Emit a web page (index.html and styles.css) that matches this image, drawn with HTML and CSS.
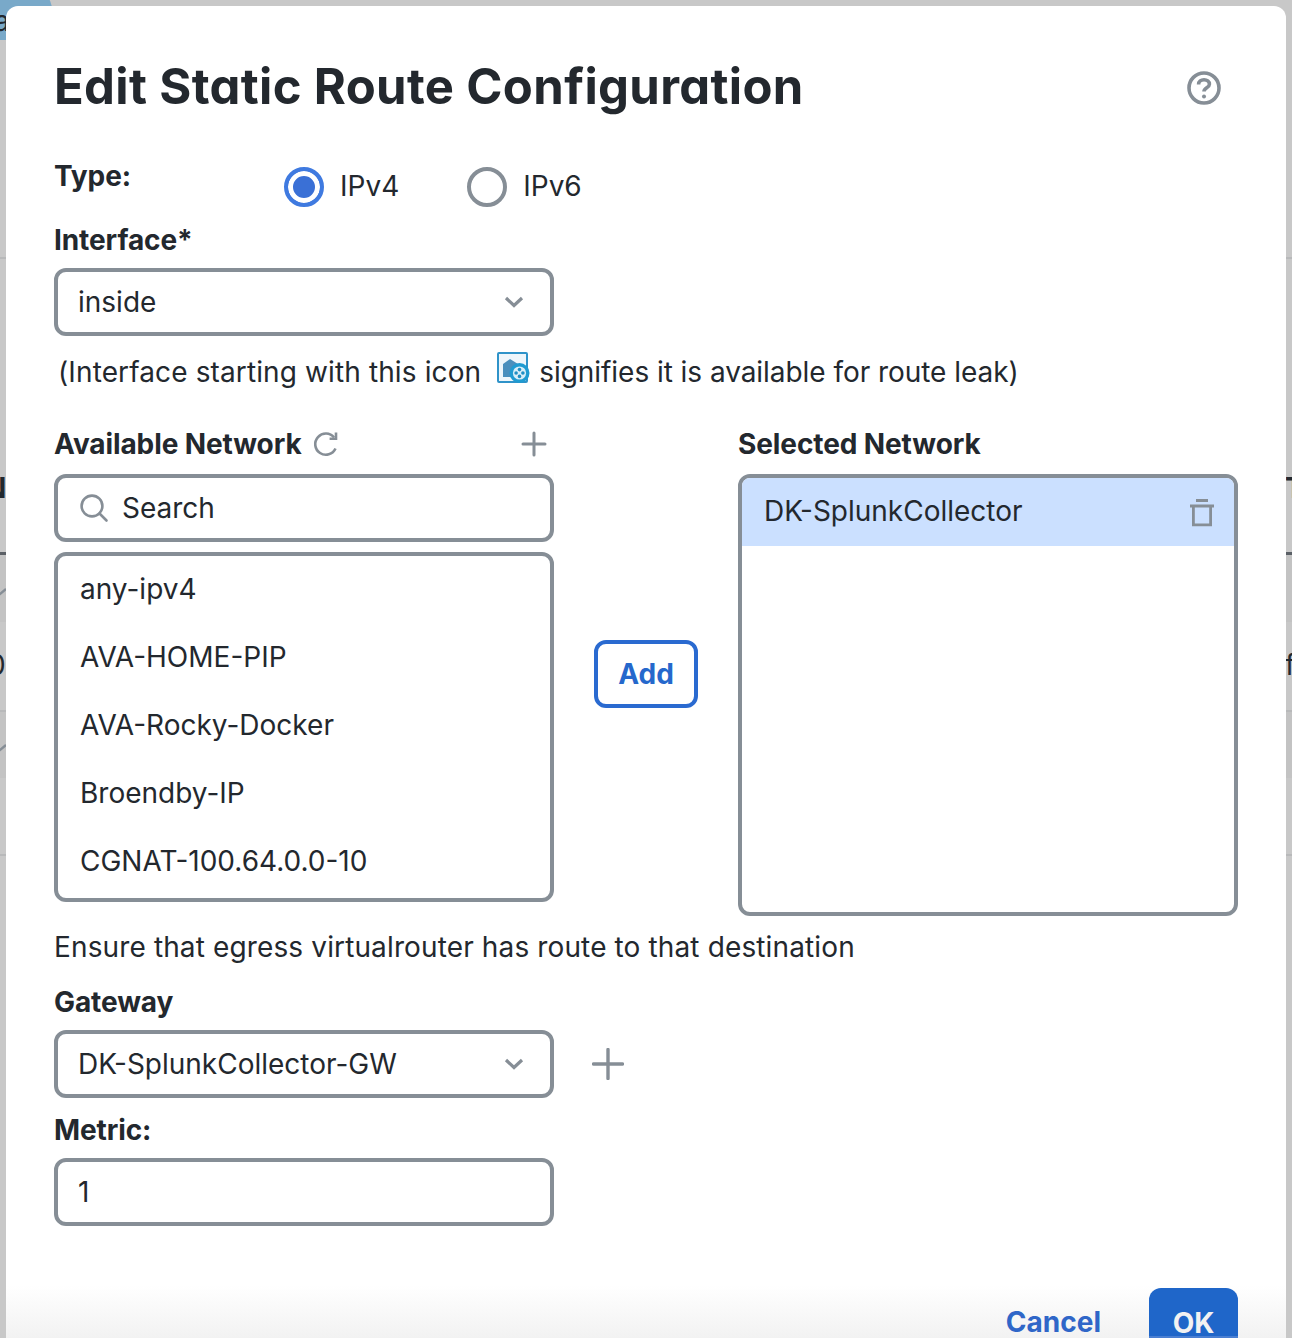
FILE: index.html
```html
<!DOCTYPE html>
<html>
<head>
	<title>Edit Static Route Configuration</title>
<link rel="stylesheet" href="styles.css">
</head>
<body>
  <!-- page behind the dialog -->
  <div class="backdrop">
    <div class="bg-chip">a</div>
    <div class="bg-line bg-line-a"></div>
    <div class="bg-line bg-line-head"></div>
    <div class="bg-line bg-line-b"></div>
    <div class="bg-line bg-line-c"></div>
    <div class="bg-row bg-row-a"></div>
    <div class="bg-row bg-row-b"></div>
    <span class="bg-text bg-t1">N</span>
    <span class="bg-text bg-t2">T</span>
    <span class="bg-text bg-t3">0</span>
    <span class="bg-text bg-t4">f</span>
    <svg class="bg-check bg-check-a" width="14" height="10" viewBox="0 0 14 10" fill="none" stroke="#868e96" stroke-width="2.4"><path d="M1 2l6 5 6-5"/></svg>
    <svg class="bg-check bg-check-b" width="14" height="10" viewBox="0 0 14 10" fill="none" stroke="#868e96" stroke-width="2.4"><path d="M1 2l6 5 6-5"/></svg>
  </div>

  <div class="modal">
    <div class="modal-head">
      <h1 class="title">Edit Static Route Configuration</h1>
      <svg class="help" width="36" height="36" viewBox="0 0 36 36" fill="none" stroke="#868e96" stroke-width="3.6">
        <circle cx="18" cy="18" r="15"/>
        <path d="M12.6 14.4c0-3 2.4-4.6 5.4-4.6s5.4 1.7 5.4 4.4c0 3.6-5.4 3.5-5.4 7.2"/>
        <circle cx="18" cy="26.4" r="2" fill="#868e96" stroke="none"/>
      </svg>
    </div>

    <div class="type-row">
      <div class="label type-label">Type:</div>
      <div class="radio-item">
        <span class="radio radio-on"></span>
        <span>IPv4</span>
      </div>
      <div class="radio-item">
        <span class="radio"></span>
        <span>IPv6</span>
      </div>
    </div>

    <div class="label label-interface">Interface*</div>
    <div class="box select">
      <span>inside</span>
      <svg class="chevron" width="20" height="12" viewBox="0 0 20 12" fill="none" stroke="#868e96" stroke-width="3.2"><path d="M2 2l8 7.5L18 2"/></svg>
    </div>
    <div class="hint">
      <span class="hint-a">(Interface starting with this icon</span>
      <svg class="leak-icon" width="33" height="32" viewBox="0 0 33 32">
        <rect x="1" y="1" width="29" height="29" rx="1" fill="#eef6fb" stroke="#2f93c9" stroke-width="2"/>
        <path d="M6 25V12l7-5 8 5v13z" fill="#4a8fbd"/>
        <circle cx="22.5" cy="21" r="10" fill="#1f9bd1"/>
        <circle cx="22.5" cy="21" r="6.6" fill="#d8eef8"/>
        <circle cx="22.5" cy="17.6" r="1.8" fill="#1f8fc4"/>
        <circle cx="22.5" cy="24.4" r="1.8" fill="#1f8fc4"/>
        <circle cx="19.1" cy="21" r="1.8" fill="#1f8fc4"/>
        <circle cx="25.9" cy="21" r="1.8" fill="#1f8fc4"/>
      </svg>
      <span class="hint-b">signifies it is available for route leak)</span>
    </div>

    <div class="transfer">
      <div class="col">
        <div class="col-head">
          <span class="label">Available Network</span>
          <svg class="refresh" width="28" height="28" viewBox="0 0 28 28" fill="none" stroke="#868e96" stroke-width="2.6">
            <path d="M23.5 18.5a10.6 10.6 0 1 1-1.4-11"/>
            <path d="M24 2.6v6.2h-6.4"/>
          </svg>
          <svg class="col-plus" width="26" height="26" viewBox="0 0 26 26" stroke="#868e96" stroke-width="3" stroke-linecap="round"><path d="M13 2v22M2 13h22"/></svg>
        </div>
        <div class="box search">
          <svg width="30" height="30" viewBox="0 0 30 30" fill="none" stroke="#868e96" stroke-width="2.6">
            <circle cx="13" cy="13" r="10.4"/>
            <path d="M20.5 20.5l7 7" stroke-linecap="round"/>
          </svg>
          <span>Search</span>
        </div>
        <div class="box list">
          <div class="list-item">any-ipv4</div>
          <div class="list-item">AVA-HOME-PIP</div>
          <div class="list-item">AVA-Rocky-Docker</div>
          <div class="list-item">Broendby-IP</div>
          <div class="list-item">CGNAT-100.64.0.0-10</div>
        </div>
      </div>

      <div class="mid">
        <button class="btn-add">Add</button>
      </div>

      <div class="col">
        <div class="col-head">
          <span class="label">Selected Network</span>
        </div>
        <div class="box selected">
          <div class="selected-item">
            <span>DK-SplunkCollector</span>
            <svg class="trash" width="24" height="28" viewBox="0 0 24 28" fill="none" stroke="#868e96" stroke-width="2.8">
              <path d="M0 7h24"/>
              <path d="M6 1.5h12"/>
              <path d="M3.4 7v18.8h17.2V7"/>
            </svg>
          </div>
        </div>
      </div>
    </div>

    <div class="note">Ensure that egress virtualrouter has route to that destination</div>

    <div class="label label-gateway">Gateway</div>
    <div class="gateway-row">
      <div class="box select">
        <span>DK-SplunkCollector-GW</span>
        <svg class="chevron" width="20" height="12" viewBox="0 0 20 12" fill="none" stroke="#868e96" stroke-width="3.2"><path d="M2 2l8 7.5L18 2"/></svg>
      </div>
      <svg class="gw-plus" width="32" height="32" viewBox="0 0 32 32" stroke="#868e96" stroke-width="3.4" stroke-linecap="round"><path d="M16 1.5v29M1.5 16h29"/></svg>
    </div>

    <div class="label label-metric">Metric:</div>
    <div class="box metric">1</div>

    <div class="modal-foot">
      <a class="cancel">Cancel</a>
      <button class="btn-ok">OK</button>
    </div>
  </div>
</body>
</html>
```

FILE: styles.css
```css
html, body {
  margin: 0;
  height: 1338px;
  overflow: hidden;
}

body {
  position: relative;
  font-family: Inter, "Liberation Sans", sans-serif;
  font-size: 28px;
  color: #23282e;
  background: #c8c8c8;
}

/* things behind the dialog */
.backdrop {
  position: absolute;
  top: 0;
  left: 0;
  width: 1292px;
  height: 1338px;
  overflow: hidden;
}

.bg-chip {
  position: absolute;
  left: -14px;
  top: -12px;
  width: 66px;
  height: 52px;
  padding-left: 8px;
  box-sizing: border-box;
  line-height: 66px;
  border-radius: 0 22px 0 0;
  background: #79a9c9;
}

.bg-line {
  position: absolute;
  left: 0;
  width: 100%;
  height: 2px;
  background: #b8b9ba;
}

.bg-line-a { top: 257px; }
.bg-line-head { top: 552px; height: 3px; background: #5b6066; }
.bg-line-b { top: 710px; }
.bg-line-c { top: 854px; }

.bg-row {
  position: absolute;
  left: 0;
  width: 100%;
  background: #c3c3c3;
}

.bg-row-a { top: 555px; height: 67px; }
.bg-row-b { top: 712px; height: 66px; }

.bg-text {
  position: absolute;
  line-height: 30px;
}

.bg-t1 { left: -15px; top: 473px; font-weight: 700; }
.bg-t2 { left: 1285px; top: 473px; font-weight: 700; }
.bg-t3 { left: -12px; top: 650px; }
.bg-t4 { left: 1285px; top: 650px; }

.bg-check {
  position: absolute;
  left: -7px;
}

.bg-check-a { top: 587px; }
.bg-check-b { top: 743px; }

/* dialog */
.modal {
  position: relative;
  width: 1280px;
  height: 1332px;
  margin: 6px 0 0 6px;
  padding: 0 48px;
  box-sizing: border-box;
  background: #fff;
  border-radius: 12px 12px 0 0;
  overflow: hidden;
}

.modal-head {
  display: flex;
  align-items: center;
  justify-content: space-between;
  height: 50px;
  padding-top: 56px;
}

.title {
  margin: 0;
  font-size: 49px;
  line-height: 50px;
  font-weight: 650;
  letter-spacing: 0.35px;
  font-feature-settings: "cv11";
}

.help {
  margin-right: 16px;
  margin-top: 2px;
}

.label {
  font-weight: 650;
  line-height: 32px;
  letter-spacing: -0.1px;
}

.type-row {
  display: flex;
  align-items: flex-start;
  height: 48px;
  margin-top: 48px;
}

.type-label {
  width: 230px;
}

.radio-item {
  display: flex;
  align-items: center;
  gap: 16px;
  margin-right: 68px;
  height: 44px;
  margin-top: 4px;
}

.radio {
  width: 40px;
  height: 40px;
  margin-top: 2px;
  box-sizing: border-box;
  border: 4px solid #868e96;
  border-radius: 50%;
  background: #fff;
}

.radio-on {
  border-color: #3f7ae0;
  background: #3a70d6;
  box-shadow: inset 0 0 0 5px #fff;
}

.label-interface {
  margin-top: 16px;
}

.box {
  box-sizing: border-box;
  width: 500px;
  border: 4px solid #868e96;
  border-radius: 12px;
  background: #fff;
}

.select {
  display: flex;
  align-items: center;
  justify-content: space-between;
  height: 68px;
  margin-top: 12px;
  padding: 0 26px 0 20px;
}

.hint {
  display: flex;
  align-items: center;
  gap: 16px;
  height: 40px;
  margin-top: 16px;
  padding-left: 4px;
}

.hint-a {
  letter-spacing: 0.12px;
}

.hint-b {
  margin-left: -7px;
  letter-spacing: -0.05px;
}

.leak-icon {
  margin-top: -8px;
}

.transfer {
  display: flex;
  margin-top: 36px;
}

.col {
  width: 500px;
}

.col-head {
  display: flex;
  align-items: center;
  gap: 10px;
  height: 32px;
}

.col-plus {
  margin-left: auto;
  margin-right: 7px;
}

.search {
  display: flex;
  align-items: center;
  gap: 13px;
  height: 68px;
  margin-top: 14px;
  padding-left: 21px;
}

.list {
  height: 350px;
  margin-top: 10px;
  padding: 0 22px;
}

.list-item {
  height: 68px;
  line-height: 66px;
}

.mid {
  display: flex;
  align-items: center;
  justify-content: center;
  width: 184px;
  padding-top: 4px;
}

.btn-add {
  width: 104px;
  height: 68px;
  border: 4px solid #2a6ad0;
  border-radius: 12px;
  background: #fff;
  color: #2568cc;
  font-family: inherit;
  font-size: 28px;
  font-weight: 700;
}

.selected {
  height: 442px;
  margin-top: 14px;
  overflow: hidden;
}

.selected-item {
  display: flex;
  align-items: center;
  justify-content: space-between;
  height: 68px;
  box-sizing: border-box;
  padding: 0 20px 2px 22px;
  background: #cbe0ff;
}

.trash {
  margin-top: 4px;
}

.note {
  margin-top: 14px;
  line-height: 34px;
  letter-spacing: 0.13px;
}

.label-gateway {
  margin-top: 22px;
}

.gateway-row {
  display: flex;
  align-items: center;
  gap: 38px;
}

.gateway-row .gw-plus {
  margin-top: 12px;
}

.label-metric {
  margin-top: 16px;
}

.metric {
  height: 68px;
  margin-top: 12px;
  padding-left: 20px;
  line-height: 60px;
}

.modal-foot {
  position: absolute;
  left: 0;
  right: 0;
  bottom: 0;
  height: 64px;
  padding: 14px 48px 0;
  box-sizing: border-box;
  display: flex;
  justify-content: flex-end;
  gap: 48px;
  background: linear-gradient(#fff 18%, #f2f2f2);
}

.cancel {
  margin-top: 17px;
  color: #2f66c8;
  font-weight: 700;
}

.btn-ok {
  width: 89px;
  height: 50px;
  padding: 18px 0 0;
  border: 0;
  border-bottom: 2px solid #4a7fd2;
  border-radius: 12px 12px 0 0;
  background: #1f66c9;
  color: #f2f2f2;
  font-family: inherit;
  font-size: 28px;
  font-weight: 700;
}
```
